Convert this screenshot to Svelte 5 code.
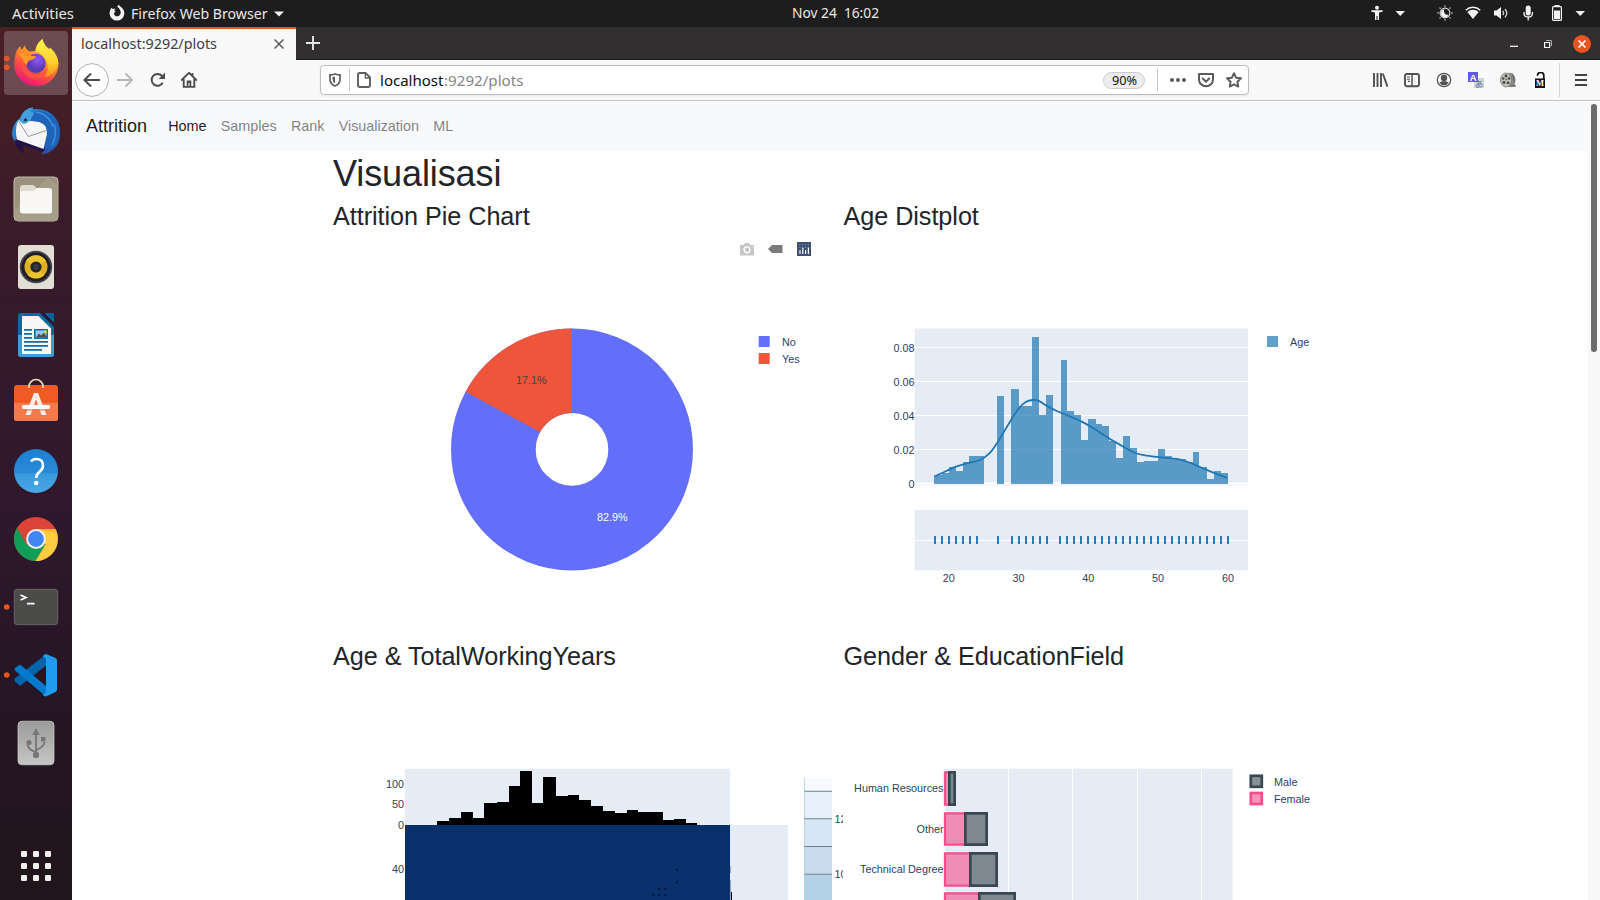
<script>
  const menu = [
    { label: 'Home', active: true },
    { label: 'Samples' },
    { label: 'Rank' },
    { label: 'Visualization' },
    { label: 'ML' }
  ];

  // Age histogram bins: left, right, top in thirds of a pixel from the chart origin
  const ageBins = [
    [162, 185, 494], [185, 207, 489], [207, 228, 471], [228, 249, 483], [249, 267, 456], [267, 312, 438],
    [351, 372, 258], [393, 417, 237], [417, 456, 288], [456, 477, 81], [477, 498, 315], [498, 519, 255],
    [543, 561, 150], [561, 582, 303], [582, 603, 315], [603, 624, 390], [624, 648, 327], [648, 666, 342],
    [666, 687, 348], [687, 708, 393], [708, 729, 444], [729, 750, 378], [750, 771, 414], [771, 792, 456],
    [792, 834, 453], [834, 855, 417], [855, 876, 438], [876, 918, 447], [918, 939, 456], [939, 957, 426],
    [957, 981, 471], [981, 1002, 507], [1002, 1023, 483], [1023, 1044, 489]
  ];

  const density = [
    [165, 499], [186, 489], [228, 470], [265, 459], [300, 450], [328, 430], [352, 398], [390, 335], [415, 297],
    [437, 276], [458, 270], [475, 272], [500, 287], [530, 303], [565, 317], [605, 335], [640, 355], [690, 387],
    [730, 410], [765, 429], [800, 437], [850, 443], [905, 450], [960, 471], [1000, 488], [1042, 504]
  ].map(([x, y]) => [880 + x / 3, 310 + y / 3]);

  function smooth(pts) {
    let d = `M${pts[0][0]} ${pts[0][1]}`;
    for (let i = 0; i < pts.length - 1; i++) {
      const a = pts[i - 1] ?? pts[i];
      const b = pts[i];
      const c = pts[i + 1];
      const e = pts[i + 2] ?? c;
      d += `C${b[0] + (c[0] - a[0]) / 6} ${b[1] + (c[1] - a[1]) / 6} ${c[0] - (e[0] - b[0]) / 6} ${c[1] - (e[1] - b[1]) / 6} ${c[0]} ${c[1]}`;
    }
    return d;
  }

  const ages = Array.from({ length: 43 }, (_, i) => 18 + i).filter((n) => ![25, 26, 28, 35].includes(n));
  const rugX = (n) => Math.round(948.8 + 6.98 * (n - 20));

  const yTicks = [['0.08', 347.5], ['0.06', 381.5], ['0.04', 415.5], ['0.02', 449.5], ['0', 483.5]];
  const xTicks = [20, 30, 40, 50, 60];

  const jointEdges = [340, 375, 409, 444, 476, 514, 549, 581, 616, 648, 685, 720, 752, 787, 822, 857, 891, 923, 996, 1028, 1063, 1095];
  const jointTops = [603, 594, 576, 594, 549, 546, 498, 453, 549, 471, 528, 525, 540, 558, 573, 579, 570, 576, 600, 597, 609];
  const joint = jointTops.map((t, i) => ({
    x: Math.round(320 + jointEdges[i] / 2.904),
    r: Math.round(320 + jointEdges[i + 1] / 2.904),
    y: 620 + t / 3
  }));
  const points = [[677, 869.7], [677, 882.5], [659, 889], [665.3, 889], [653.3, 895], [659, 895], [665.3, 895]];

  const scale = [
    [778, 791.3, '#f7fbff'], [791.3, 818.7, '#e7f0fa'], [818.7, 846.5, '#d7e6f4'],
    [846.5, 874.3, '#c9dbef'], [874.3, 902, '#b3d2e7']
  ];

  const fields = [
    { name: 'Human Resources', y: 771, h: 35, split: 948, end: 956, base: 792 },
    { name: 'Other', y: 812, h: 34, split: 964, end: 988, base: 833 },
    { name: 'Technical Degree', y: 852, h: 35, split: 969, end: 998, base: 873 },
    { name: '', y: 892, h: 35, split: 978, end: 1016, base: 914 }
  ];
</script>

{#snippet ui(text, width, size, height, base, fill)}
  <svg class="ui" {width} {height}><text x="0" y={base} font-size={size} {fill} textLength={width} lengthAdjust="spacingAndGlyphs">{text}</text></svg>
{/snippet}

<div class="desktop">
  <header class="panel">
    <div class="left">
      {@render ui('Activities', 62, 14.5, 27, 19, '#e8e8e6')}
      <svg class="fxmark" width="16" height="18" viewBox="0 0 16 18"><path d="M8 2.600C9 1.900 9.600 1 10 .6c.3 1.400 1.400 2 2.500 3C14.300 5.100 15.500 7 15.300 10A7.400 7.400 0 0 1 .6 10C.5 7.500 1.200 5 3 3.400c.1 1 .4 1.300 1 1.700 1-.5 1.800-.4 2.800 0-1 .5-1.500 1.100-1.500 1.900l1.500.4c-.5.700-1.500.9-1.900 1.800.2 1.900 1.600 3.100 3.300 3.100 2.200 0 3.600-1.700 3.500-3.700C11.600 6 10.300 4.500 8 2.600z" fill="#f2f2f0"/></svg>
      {@render ui('Firefox Web Browser', 136.5, 14.5, 27, 19, '#e8e8e6')}
      <svg class="caret" width="10" height="6" viewBox="0 0 10 6"><path d="M0 .5h10L5 5.500z" fill="#f2f2f0"/></svg>
    </div>
    <div class="clock">{@render ui('Nov 24  16:02', 87, 14.3, 27, 18, '#e8e8e6')}</div>
    <div class="tray">
      <svg width="16" height="16" viewBox="0 0 16 16"><g fill="#f2f2f0"><circle cx="8" cy="2.800" r="2"/><path d="M2.300 5.200h11.400v1.500L10 7.500V15H8.500v-4h-1v4H6V7.500l-3.700-.8z"/></g></svg>
      <svg class="g7" width="16" height="16" viewBox="0 0 16 16"><path d="M3.500 6h9.500L8.250 11z" fill="#f2f2f0"/></svg>
      <svg class="g29" width="16" height="16" viewBox="0 0 16 16"><g fill="none" stroke="#d8d8d6"><circle cx="8" cy="8" r="4.900" stroke-width="1.100"/><path d="M8 .2v1.700M8 14.100v1.700M.2 8h1.700M14.100 8h1.700M2.500 2.500l1.200 1.200M12.300 12.300l1.200 1.200M2.500 13.500l1.200-1.200M12.300 3.700l1.200-1.200" stroke-width="1.300" opacity=".7"/></g><path d="M7.300 4.300A4 4 0 1 0 11.700 9.500 3.600 3.600 0 0 1 7.300 4.300z" fill="#f2f2f0"/></svg>
      <svg class="g12" width="16" height="16" viewBox="0 0 16 16"><path d="M.8 5.200a10.500 10.500 0 0 1 14.400 0" fill="none" stroke="#f2f2f0" stroke-width="1.500"/><path d="M2.400 7a8.300 8.300 0 0 1 11.200 0L8 14z" fill="#f2f2f0"/></svg>
      <svg class="g12" width="16" height="16" viewBox="0 0 16 16"><path d="M1 5.500h2.500L8 2v12l-4.500-3.500H1z" fill="#f2f2f0"/><path d="M9.800 5.800q1.500 2.200 0 4.400M12 4q3.500 4 0 8.400" fill="none" stroke="#f2f2f0" stroke-width="1.300" opacity=".85"/></svg>
      <svg class="g11" width="16" height="16" viewBox="0 0 16 16"><rect x="5.700" y=".6" width="5" height="9.800" rx="2.500" fill="#f2f2f0"/><path d="M4 7v1.500q0 3.500 4.200 3.500t4.200-3.500V7M8.200 12v3.600" fill="none" stroke="#f2f2f0" stroke-width="1.300"/></svg>
      <svg class="g13" width="16" height="16" viewBox="0 0 16 16"><path d="M5.500 0h5v2h-5z" fill="#f2f2f0"/><rect x="3.600" y="1.700" width="8.800" height="13.700" rx="1" fill="none" stroke="#f2f2f0" stroke-width="1.200"/><path d="M5 5.500h6V14H5z" fill="#f2f2f0"/></svg>
      <svg class="g7" width="16" height="16" viewBox="0 0 16 16"><path d="M3.500 6h9.500L8.250 11z" fill="#f2f2f0"/></svg>
    </div>
  </header>

  <div class="below">
    <aside class="dock">
      <svg viewBox="0 0 72 68">
        <defs>
          <linearGradient id="fx" x1=".8" y1="0" x2=".3" y2="1"><stop offset=".1" stop-color="#ffe03a"/><stop offset=".42" stop-color="#ff9422"/><stop offset=".68" stop-color="#ff4b44"/><stop offset="1" stop-color="#e3157e"/></linearGradient>
          <linearGradient id="fxy" x1=".5" y1="0" x2=".5" y2="1"><stop offset="0" stop-color="#fff44f"/><stop offset=".6" stop-color="#ffd02e"/><stop offset="1" stop-color="#ff8a1a"/></linearGradient>
          <radialGradient id="fxp" cx=".6" cy=".3"><stop offset="0" stop-color="#9059ff"/><stop offset="1" stop-color="#5b3bb5"/></radialGradient>
        </defs>
        <rect x="4" y="2" width="64" height="64" rx="4" fill="#fff" fill-opacity=".2"/>
        <circle cx="6.700" cy="29.500" r="2.800" fill="#e95420"/><circle cx="6.700" cy="38.300" r="2.800" fill="#e95420"/>
        <path d="M15 28q1-7 5-11l1.500 4 3.500-4.500q1 5 5 6l5.500-.5Q36 15 42.500 10q1 6 7 10.500l.5-2q8.500 8 8.500 16.500A22.200 22.200 0 0 1 14 35q0-4 1-7z" fill="url(#fx)"/>
        <path d="M35.500 22Q36 15 42.500 10q1 6 7 10.500l.5-2q8 8 8.300 16-3 12-14 14 6-8 1.500-17-3-7-10.300-9.500z" fill="url(#fxy)"/>
        <circle cx="36" cy="34.500" r="9.700" fill="url(#fxp)"/>
        <path d="M18 24q7 0 9 3h9q-1 3-5 4-4 1-4 5-4-3-4-6z" fill="#ff9b28"/>
        <path d="M23 31q1 13 13 14 8 0 12-5-2 9-12 10-12-1-14-12z" fill="#ff5a3c" opacity=".65"/>
      </svg>
      <svg viewBox="0 0 72 68">
        <defs><linearGradient id="tb" x1="0" y1="0" x2="1" y2="1"><stop offset="0" stop-color="#3b9bdc"/><stop offset=".5" stop-color="#1f6fc4"/><stop offset="1" stop-color="#2f429f"/></linearGradient></defs>
        <path d="M12 37Q12 27 20 21q3-9 13-10.500 0 1-.5 1.500Q51 11 58 25q4 10 1 19-3 8-11 12l-7 1.500 4-5L16 45q-4-3-4-8z" fill="url(#tb)"/>
        <path d="M15 43q1 10 10 14-3-5-2.500-9l20 7 3-4-28-9z" fill="#241145"/>
        <path d="M18 23.500h8l10 1q7 0 10 4l1 8.500-3.500 15-26.500-9.500q-2.500-10 1-19z" fill="#f6f6f7"/>
        <path d="M18.500 24l9.800 15.500L46 33.500" fill="none" stroke="#98989c" stroke-width="1"/>
        <path d="M20 24.500Q22 11.500 33 10.500q-3 2.500-2.500 4.500 7 .5 7 4.500-2 4-9 5-2 2-5 2.500z" fill="#409fdc"/>
        <path d="M30 24q16-1 17.500 11.500L45 53l4-3-1 4 6-4-1 3q8-8 6-20-2-9-8-14-7-6-16-5z" fill="#1e64ba"/>
        <path d="M36 15q13 2 17 15M54 27q4 10-2 21" fill="none" stroke="#3a94df" stroke-width="1.300"/><circle cx="25.500" cy="23" r="1.400" fill="#17213c"/>
      </svg>
      <svg viewBox="0 0 72 68">
        <rect x="14" y="12" width="44" height="44" rx="4" fill="#9b917c" stroke="#c3bca8"/><path d="M57.500 20V54q-1 1.500-2.500 1.500H15V45L48 12.500z" fill="#a59d87"/>
        <path d="M20 23q0-3 3-3h9q3 0 4 3l16 2v12H20z" fill="#dfdacd"/><path d="M20 26h14l3-3h12q3 0 3 3v20q0 2.500-2.500 2.500h-27Q20 48.500 20 46z" fill="#f8f7f6"/>
      </svg>
      <svg viewBox="0 0 72 68">
        <rect x="18" y="12" width="36" height="44" rx="3" fill="#e2ded6"/><circle cx="36" cy="34" r="16.200" fill="#44444a"/><circle cx="36" cy="34" r="14.500" fill="#201f27"/><circle cx="36" cy="34" r="11.500" fill="#dfb021"/><path d="M36 34L26 28a11.500 11.500 0 0 1 20 0zM36 34l8 8a11.500 11.500 0 0 1-16 0z" fill="#ecc433"/><circle cx="36" cy="34" r="5.600" fill="#25252a"/><circle cx="36" cy="34" r="3" fill="#39393f"/>
      </svg>
      <svg viewBox="0 0 72 68">
        <rect x="18" y="12" width="36" height="44" rx="3" fill="#0b6b9f"/><path d="M18 34h36v19q0 3-3 3H21q-3 0-3-3z" fill="#3a9fd4"/><path d="M22 15h16.500L51 27.500V53H22z" fill="#f7f7f7"/><path d="M40 12h14v14z" fill="#2b1830"/><path d="M45 12h9v9z" fill="#076298"/><path d="M45 12l9 9" stroke="#1676aa"/>
        <path d="M24 28.800h8M24 32.800h8M24 36.800h8M24 40.800h24M24 44.800h24M24 48.800h18" stroke="#0b6fa6" stroke-width="1.800"/><path d="M34.800 28.800h12.400v8.400H34.800z" fill="#91cdf2" stroke="#0b6fa6" stroke-width="1.600"/><path d="M36 36.500l3-4 2 2 3-3 3 5z" fill="#4d4d4d"/><circle cx="45.500" cy="30.500" r="1.500" fill="#ffd30b"/>
      </svg>
      <svg viewBox="0 0 72 68">
        <rect x="14" y="16" width="44" height="36" rx="3" fill="#f15a24"/><path d="M14 34h44v15q0 3-3 3H17q-3 0-3-3z" fill="#f47a4d"/><path d="M29 19v-1.500a7 7 0 0 1 14 0V19" fill="none" stroke="#f2dcae" stroke-width="1.700"/>
        <path d="M25.500 46L34 24h4l8.500 22h-5L36 30.500 30.500 46z" fill="#fbeee8"/><rect x="22" y="36" width="28" height="4" rx="1.500" fill="#fff"/><path d="M24 41h24" stroke="#dc7852"/>
      </svg>
      <svg viewBox="0 0 72 68">
        <defs><linearGradient id="hp" x2="0" y2="1"><stop stop-color="#1b7fd0"/><stop offset=".54" stop-color="#2a8ad8"/><stop offset=".56" stop-color="#3899df"/><stop offset="1" stop-color="#4aa8e6"/></linearGradient></defs>
        <circle cx="36" cy="34" r="22" fill="url(#hp)"/><path d="M31 24.500q2-2.800 6-2.500 6 .5 6 6.500 0 3.500-3.700 6.500-3.200 2.700-3.200 6" fill="none" stroke="#fff" stroke-width="2.600"/><circle cx="36.200" cy="46" r="2.300" fill="#fff"/>
      </svg>
      <svg viewBox="0 0 72 68">
        <circle cx="36" cy="34" r="22" fill="#db4437"/><path d="M26.600 39.500L17 23a22 22 0 0 0 18.500 33L45.500 39.500z" fill="#0f9d58"/><path d="M36 24.200h19.600A22 22 0 0 1 35.500 56l10-16.500z" fill="#ffcd40"/><path d="M36 24.200h19.600q1 2 1.500 4z" fill="#e9b02d" opacity=".6"/><circle cx="36" cy="34" r="9.900" fill="#f1f1f1"/><circle cx="36" cy="34" r="7.900" fill="#4285f4"/>
      </svg>
      <svg viewBox="0 0 72 68">
        <circle cx="6.700" cy="34" r="2.800" fill="#e95420"/><rect x="14.300" y="16.300" width="43.400" height="35.400" rx="3" fill="#4b4b4a" stroke="#737070" stroke-width=".8"/><path d="M20.500 22l5.500 2.500-5.500 2.500M27 30.700h7.500" fill="none" stroke="#fff" stroke-width="1.700"/>
      </svg>
      <svg viewBox="0 0 72 68">
        <circle cx="6.700" cy="34" r="2.800" fill="#e95420"/><path d="M46 13.500v11L20 45l-5-4.500q-1-2 0-3.200z" fill="#0065a9"/><path d="M20 23.500L46 45v10.500L15 29.500q-1-1.500 0-2.500z" fill="#007acc"/><path d="M46 13l9.500 4q1.500.8 1.500 2.500v29q0 1.500-1.500 2.500L46 55.500q-2 0-3.500-2 3.500-.5 3.500-4v-30q0-3.500-3.500-4Q44 13 46 13z" fill="#1f9cf0"/>
      </svg>
      <svg viewBox="0 0 72 68">
        <defs><linearGradient id="us" x2="0" y2="1"><stop stop-color="#9b9b9b"/><stop offset="1" stop-color="#c6c6c6"/></linearGradient></defs>
        <rect x="18" y="12.200" width="36" height="43.600" rx="4" fill="url(#us)" stroke="#d2d2d2" stroke-width=".7"/><g fill="none" stroke="#777" stroke-width="1.900"><path d="M36 47V24M36 43q-8-2-8.500-8M36 41q8-3 8.500-8"/></g><path d="M32.200 26L36 19l3.800 7z" fill="#777"/><circle cx="29" cy="33.500" r="2.600" fill="#777"/><rect x="41" y="28" width="4.500" height="4.500" fill="#777"/><rect x="33" y="43" width="6" height="6" rx="2" fill="#777"/>
      </svg>
      <svg class="apps" viewBox="0 0 72 68">
        {#each [22, 34, 46] as y}{#each [24, 36, 48] as x}<rect x={x - 3} y={y - 3} width="6" height="6" rx="1.300" fill="#efefec"/>{/each}{/each}
      </svg>
    </aside>

    <main class="browser">
      <div class="tabs">
        <div class="tab">
          {@render ui('localhost:9292/plots', 136, 14.5, 30, 19, '#3f3d3d')}
          <svg width="10" height="10" viewBox="0 0 10 10"><path d="M.5.5l9 9M9.500.5l-9 9" stroke="#5a5858" stroke-width="1.500"/></svg>
        </div>
        <svg class="plus" width="14" height="14" viewBox="0 0 14 14"><path d="M7 0v14M0 7h14" stroke="#e6e6e6" stroke-width="1.900"/></svg>
        <div class="controls">
          <svg width="8" height="18" viewBox="0 0 8 18"><path d="M0 11.300h8" stroke="#fff" stroke-width="1.200"/></svg>
          <svg width="8" height="18" viewBox="0 0 8 18"><path d="M.6 7.500h5v5h-5z" fill="none" stroke="#fff" stroke-width="1.200"/><path d="M2 5.500h5.500V11" fill="none" stroke="#aaa"/></svg>
          <svg width="18" height="18" viewBox="0 0 18 18"><circle cx="9" cy="9" r="9" fill="#e95420"/><path d="M5.500 5.500l7 7M12.500 5.500l-7 7" stroke="#fff" stroke-width="1.700"/></svg>
        </div>
      </div>

      <div class="toolbar">
        <svg width="34" height="34" viewBox="0 0 34 34"><circle cx="17" cy="17" r="16.400" fill="#fff" stroke="#b1b1b3"/><path d="M25 17H10M16 10.500L9.500 17l6.500 6.500" fill="none" stroke="#4c4c4d" stroke-width="2"/></svg>
        <svg class="fwd" width="16" height="16" viewBox="0 0 16 16"><path d="M0 8h15M8.500 1.500L15 8l-6.500 6.500" fill="none" stroke="#b5b5b6" stroke-width="1.900"/></svg>
        <svg class="rel" width="16" height="16" viewBox="0 0 16 16"><path d="M12.700 10.800A5.900 5.900 0 1 1 12 4" fill="none" stroke="#4c4c4d" stroke-width="2"/><path d="M15 .6V7H8.700z" fill="#4c4c4d"/></svg>
        <svg class="home" width="16" height="16" viewBox="0 0 16 16"><path d="M0 8.500L8 .8l8 7.700M2.700 7v7.900h10.600V7M11.500 1v3" fill="none" stroke="#4c4c4d" stroke-width="1.900"/><path d="M5.700 8.500h4.600V14H8.500v-3h-1v3H5.700z" fill="#4c4c4d"/></svg>
        <div class="url">
          <svg width="12" height="14" viewBox="0 0 12 14"><path d="M6 1q3 .9 5 .9V6q0 5-5 7-5-2-5-7V1.900Q3 1.900 6 1z" fill="none" stroke="#5f5f60" stroke-width="1.700"/><path d="M6 3.500v7Q3.500 9 3.500 6V4z" fill="#5f5f60"/></svg>
          <i class="sep first"></i>
          <svg width="14" height="16" viewBox="0 0 14 16"><path d="M2.500 1h6L13 5.500V13q0 2-2 2H3q-2 0-2-2V2.500Q1 1 2.500 1z" fill="none" stroke="#5f5f60" stroke-width="1.900"/><path d="M8.300 1v5H13" fill="none" stroke="#5f5f60" stroke-width="1.300"/></svg>
          <span class="addr">
            {@render ui('localhost', 63.5, 15, 28, 20, '#0c0c0d')}
            {@render ui(':9292/plots', 79.5, 15, 28, 20, '#858586')}
          </span>
          <span class="zoom">{@render ui('90%', 25, 13, 17, 13, '#111')}</span>
          <i class="sep"></i>
          <svg class="more" width="16" height="16" viewBox="0 0 16 16"><g fill="#5a5a5b"><circle cx="2" cy="8" r="2"/><circle cx="8" cy="8" r="2"/><circle cx="14" cy="8" r="2"/></g></svg>
          <svg class="g12" width="16" height="16" viewBox="0 0 16 16"><path d="M1 2h14v5.500a7 6.800 0 0 1-14 0z" fill="none" stroke="#5a5a5b" stroke-width="2" stroke-linejoin="round"/><path d="M4.800 6.500L8 9.600l3.200-3.100" fill="none" stroke="#5a5a5b" stroke-width="2" stroke-linecap="round"/></svg>
          <svg class="g12" width="16" height="16" viewBox="0 0 16 16"><path d="M8 1.200l2.100 4.500 4.900.6-3.600 3.400.9 4.900L8 12.300l-4.300 2.300.9-4.900L1 6.300l4.900-.6z" fill="none" stroke="#5a5a5b" stroke-width="1.900" stroke-linejoin="round"/></svg>
        </div>
        <div class="exts">
          <svg width="16" height="16" viewBox="0 0 16 16"><path d="M2 1v14M5.500 1v14M9 1v14M10.800 1.500l4.700 13.200" stroke="#515152" stroke-width="1.900"/></svg>
          <svg width="16" height="16" viewBox="0 0 16 16"><rect x="1" y="2" width="14" height="12.200" rx="2" fill="none" stroke="#515152" stroke-width="1.900"/><path d="M8 2v12" stroke="#515152" stroke-width="1.500"/><path d="M3 5h3M3 7.200h3M4 9.400h2" stroke="#515152" stroke-width="1.100"/></svg>
          <svg width="16" height="16" viewBox="0 0 16 16"><circle cx="8" cy="8" r="6.700" fill="none" stroke="#515152" stroke-width="1.200"/><circle cx="8" cy="6" r="3.200" fill="#515152"/><path d="M3.300 10.500q4.700-3 9.400 0Q11 13.300 8 13.300t-4.700-2.800z" fill="#515152"/></svg>
          <svg width="16" height="16" viewBox="0 0 16 16"><rect x="6" y="6" width="10" height="10" fill="#cfd6da"/><text x="7" y="14.500" font-size="8" fill="#4c6b83" class="cjk">あ</text><rect width="10" height="10" fill="#6159f0"/><text x="1.800" y="8.500" font-size="9.500" font-weight="bold" fill="#fff">A</text></svg>
          <svg width="16" height="16" viewBox="0 0 16 16"><ellipse cx="10" cy="8" rx="5.500" ry="7.200" fill="#8b8b84"/><path d="M12 1.500q3 3 2.500 10M10.500 14.500h5.500l-1.500-2z" fill="#666" stroke="#666" stroke-width=".5"/><ellipse cx="6" cy="8" rx="5.500" ry="7" fill="#c2c2bc" stroke="#77776f" stroke-width=".8"/><g fill="#44443f"><circle cx="6" cy="4" r="1.400"/><circle cx="3.200" cy="6.500" r="1.200"/><circle cx="9" cy="6.500" r="1.300"/><circle cx="4" cy="10.500" r="1.400"/><circle cx="8" cy="10.800" r="1.400"/><circle cx="6" cy="7.500" r=".7"/></g></svg>
          <svg width="16" height="16" viewBox="0 0 16 16"><path d="M5.500 3.700V3a3.200 3.200 0 0 1 6.300 0v4" fill="none" stroke="#111" stroke-width="1.700"/><path d="M3 6.500h10V16H3z" fill="#111"/><text x="4" y="14" font-size="8.500" font-weight="bold" fill="#fff" class="serif">M</text></svg>
        </div>
        <i class="rule"></i>
        <svg class="burger" width="16" height="16" viewBox="0 0 16 16"><path d="M2 3h12M2 8h12M2 13h12" stroke="#414142" stroke-width="1.900"/></svg>
      </div>

      <div class="page">
        <div class="content">
          <nav>
            <b>Attrition</b>
            {#each menu as item}<a class:active={item.active}>{item.label}</a>{/each}
          </nav>
          <section>
            <h1>Visualisasi</h1>
            <div class="grid">
              <article>
                <h3>Attrition Pie Chart</h3>
                <svg width="510" height="402" viewBox="333 239 510 402">
                  <g fill="#c6c6c6"><path d="M740 245h3.500l1.500-2h4l1.500 2h3.500v10.500h-14z"/></g><circle cx="747" cy="249.800" r="2.900" fill="none" stroke="#fff" stroke-width="1.400"/><circle cx="752.300" cy="246.800" r=".7" fill="#fff"/>
                  <path d="M768 249l4-4h10.500v8H772z" fill="#7b7b7b"/>
                  <rect x="797" y="242" width="14" height="14" fill="#3f4f75"/><path d="M800 250.300v3.700M802.800 247.500v6.500M805.600 250.300v3.700M808.400 247.500v6.500" stroke="#fff" stroke-width="1.200"/><path d="M799.300 244.800h10M799.300 247.500h1.400M805 247.500h1.400" stroke="#80cfbe" stroke-width=".9" stroke-dasharray="1.300 1.500" opacity=".7"/>
                  <circle cx="572" cy="449.400" r="78.650" fill="none" stroke="#636efa" stroke-width="84.700"/>
                  <path d="M572 328.400v84.700a36.300 36.300 0 0 0-31.900 19L465.600 391.800A121 121 0 0 1 572 328.400z" fill="#ef553b"/>
                  <text x="531.300" y="384" text-anchor="middle" fill="#444">17.1%</text><text x="612.300" y="521" text-anchor="middle" fill="#fff">82.9%</text>
                  <rect x="758.700" y="336" width="11" height="11" fill="#636efa"/><rect x="758.700" y="353" width="11" height="11" fill="#ef553b"/>
                  <text x="782" y="346">No</text><text x="782" y="363">Yes</text>
                </svg>
              </article>
              <article>
                <h3>Age Distplot</h3>
                <svg width="510" height="402" viewBox="844 239 510 402">
                  <path d="M914.700 328.500H1248V485.500H914.700zM914.700 510H1248v60.300H914.700z" fill="#e5ecf6"/>
                  {#each yTicks as [label, y]}
                    <path d="M914.700 {y}H1248" stroke="#fff" stroke-width={label === '0' ? 1.8 : 1}/>
                    <text x="914.500" y={y + 4.2} text-anchor="end">{label}</text>
                  {/each}
                  <path d="M914.700 540.500H1248" stroke="#fff"/>
                  <g fill="#1f77b4" fill-opacity=".7" shape-rendering="crispEdges">
                    {#each ageBins as [l, r, t]}<rect x={880 + l / 3} y={310 + t / 3} width={(r - l) / 3} height={(522 - t) / 3}/>{/each}
                  </g>
                  <path d={smooth(density)} fill="none" stroke="#1f77b4" stroke-width="1.800"/>
                  {#each ages as n}<path d="M{rugX(n)} 536v8" stroke="#1f77b4" stroke-width="1.900"/>{/each}
                  {#each xTicks as n}<text x={948.7 + 6.98 * (n - 20)} y="582" text-anchor="middle">{n}</text>{/each}
                  <rect x="1267" y="336" width="11" height="11" fill="#1f77b4" fill-opacity=".7"/><text x="1290" y="346">Age</text>
                </svg>
              </article>
              <article>
                <h3>Age &amp; TotalWorkingYears</h3>
                <svg width="510" height="222" viewBox="333 679 510 222">
                  <path d="M405 768.700H730V825H788v76H405z" fill="#e5ecf6"/>
                  <g shape-rendering="crispEdges">{#each joint as b}<rect x={b.x} y={b.y} width={b.r - b.x} height={825 - b.y}/>{/each}</g>
                  <path d="M405 825H730v76H405z" fill="#08306b"/>
                  {#each points as [x, y]}<circle cx={x} cy={y} r="1.300" fill="#020a20" fill-opacity=".55"/>{/each}
                  <path d="M730.300 866v7M730.300 880v20" stroke="#596b8c" stroke-width=".7"/><path d="M731.500 892v9" stroke="#000"/>
                  <text x="404" y="788" text-anchor="end">100</text><text x="404" y="808" text-anchor="end">50</text><text x="404" y="829" text-anchor="end">0</text><text x="404" y="873" text-anchor="end">40</text>
                  {#each scale as [a, b, c]}<rect x="804.500" y={a} width="27.500" height={b - a} fill={c}/>{/each}
                  <path d="M804.500 778v124" stroke="#aacbe0" stroke-width=".8"/>
                  <path d="M804.500 791.300H832M804.500 818.700H832M804.500 846.500H832M804.500 874.300H832" stroke="#71808c" stroke-width="1.100"/>
                  <text x="834.500" y="823">12k</text><text x="834.500" y="878">10k</text>
                </svg>
              </article>
              <article>
                <h3>Gender &amp; EducationField</h3>
                <svg width="510" height="222" viewBox="844 679 510 222">
                  <path d="M944.700 768.700H1232.700V901H944.700z" fill="#e5ecf6"/>
                  <path d="M1008.500 768.700V901M1072.500 768.700V901M1137.500 768.700V901M1201.500 768.700V901" stroke="#fff"/>
                  {#each fields as f}
                    <path d="M945 {f.y + 1.35}H{f.split + 1.3}V{f.y + f.h - 1.35}H945z" fill="#f64e8b" fill-opacity=".6" stroke="#f64e8b" stroke-width="2.300"/>
                    <rect x={f.split + 1.35} y={f.y + 1.35} width={f.end - f.split - 2.7} height={f.h - 2.7} fill="#7e8891" stroke="#3a4750" stroke-width="2.700"/>
                    <text x="943.500" y={f.base} text-anchor="end">{f.name}</text>
                  {/each}
                  <rect x="1250.800" y="775.800" width="11" height="11" fill="#3a4750" fill-opacity=".6" stroke="#3a4750" stroke-width="2.700"/>
                  <rect x="1250.800" y="793" width="11" height="11" fill="#f64e8b" fill-opacity=".6" stroke="#f64e8b" stroke-width="2.700"/>
                  <text x="1274" y="786">Male</text><text x="1274" y="803">Female</text>
                </svg>
              </article>
            </div>
          </section>
        </div>
        <div class="scroll"><i></i></div>
      </div>
    </main>
  </div>
</div>

<style>
  :global(body) { margin: 0; background: #fff; overflow: hidden; }
  svg { display: block; flex: none; }
  .desktop { width: 1600px; height: 900px; display: flex; flex-direction: column; overflow: hidden; font-family: 'Liberation Sans', Arial, sans-serif; }
  .ui { overflow: visible; }
  .ui text { font-family: 'Noto Sans', sans-serif; white-space: pre; }
  .panel { height: 27px; flex: none; background: #1d1d1d; display: grid; grid-template-columns: 792px 1fr auto; }
  .left, .tray { display: flex; align-items: center; }
  .left { padding-left: 12px; }
  .fxmark { margin: 0 6px 2px 35px; }
  .caret { margin-left: 6px; }
  .tray { padding-right: 12px; padding-bottom: 1px; }
  .g7 { margin-left: 7px; } .g11 { margin-left: 11px; } .g12 { margin-left: 12px; } .g13 { margin-left: 13px; } .g29 { margin-left: 29px; }
  .below { flex: 1; display: flex; min-height: 0; }
  .dock { width: 72px; flex: none; box-sizing: border-box; padding: 2px 0 0; display: flex; flex-direction: column; background: linear-gradient(#4a2025, #3a1b29 22%, #2f182d 55%, #281628 70%, #21151b); }
  .dock svg { width: 72px; height: 68px; }
  .dock .apps { margin-top: 55px; }
  .browser { flex: 1; min-width: 0; display: flex; flex-direction: column; }
  .tabs { height: 33px; flex: none; background: #322f30; display: flex; align-items: center; box-shadow: inset 0 -1px #1e1c1c; }
  .tab { width: 224px; height: 33px; box-sizing: border-box; border-top: 2px solid #e95420; background: #f9f9fa; padding: 0 12px 0 9px; display: flex; justify-content: space-between; align-items: center; }
  .tab svg:last-child { margin-bottom: 1px; }
  .plus { margin: 0 0 1px 10px; }
  .controls { margin-left: auto; display: flex; gap: 26px; padding: 0 9px 0 0; align-items: center; }
  .controls svg:nth-child(3) { margin-left: -5px; }
  .toolbar { height: 40px; flex: none; background: #f9f9fa; border-bottom: 1px solid #c4c4c5; display: flex; align-items: center; padding: 0 11px 0 3px; }
  .fwd { margin-left: 8px; } .rel { margin-left: 17px; } .home { margin-left: 15px; }
  .url { margin-left: 123px; width: 929px; height: 30px; box-sizing: border-box; border: 1px solid #bdbdbe; border-radius: 4px; background: #fff; box-shadow: 0 1px 3px #0001; display: flex; align-items: center; padding: 0 6px 0 8px; }
  .sep { width: 1px; height: 22px; background: #c3c3c4; }
  .first { margin: 0 7px 0 8px; }
  .addr { display: flex; margin-left: 9px; flex: 1; }
  .zoom { width: 40px; height: 15px; border: 1px solid #cbcbcc; border-radius: 9px; background: #ededee; display: flex; justify-content: center; align-items: center; margin-right: 12px; }
  .more { margin-left: 12px; }
  .exts { display: flex; gap: 16px; margin-left: auto; }
  .rule { width: 1px; height: 34px; background: #d7d7d8; margin: 0 13px 0 11px; }
  .cjk { font-family: 'Noto Sans CJK JP', sans-serif; }
  .serif { font-family: 'Liberation Serif', serif; }
  .page { flex: 1; min-height: 0; display: flex; background: #fff; }
  .content { flex: 1; overflow: hidden; }
  nav { height: 50px; background: #f8f9fb; display: flex; align-items: center; padding-left: 14px; font-size: 14.4px; }
  nav b { font-size: 18px; font-weight: 400; color: #17191a; margin: 1px 7px 0 0; }
  nav a { margin-left: 14.2px; color: rgba(0, 0, 0, 0.5); letter-spacing: -0.01px; }
  nav a.active { color: rgba(0, 0, 0, 0.9); }
  section { padding-left: 261px; color: #212529; }
  h1, h3 { margin: 0; font-weight: 400; line-height: 1.2; }
  h1 { font-size: 36px; height: 43.2px; box-sizing: border-box; padding-top: 0.8px; margin-bottom: 7.2px; letter-spacing: -0.1px; }
  h3 { font-size: 25.2px; height: 30px; margin-bottom: 7.6px; letter-spacing: -0.04px; }
  .grid { display: grid; grid-template-columns: 510.5px 510.5px; }
  article { height: 440px; }
  article svg text { font-size: 10.8px; fill: #2a3f5f; }
  article svg text[fill='#fff'] { fill: #fff; }
  article svg text[fill='#444'] { fill: #444; }
  .scroll { width: 12px; background: #f9f9fa; }
  .scroll i { display: block; width: 6px; height: 248px; margin: 3px 0 0 3px; border-radius: 3px; background: #6b6b6b; }
</style>
